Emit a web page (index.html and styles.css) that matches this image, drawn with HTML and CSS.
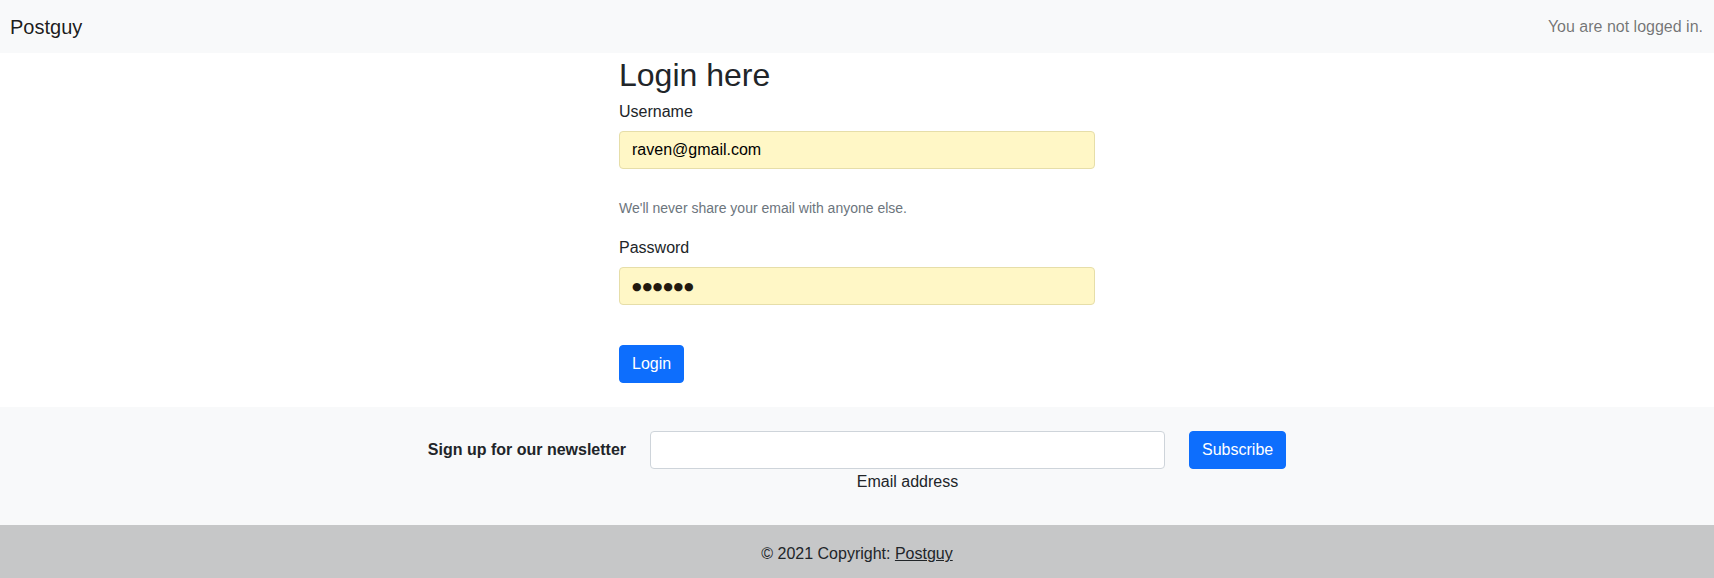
FILE: index.html
```html
<!DOCTYPE html>
<html lang="en">
<head>
<meta charset="utf-8">
<title>Postguy - Login</title>
<link rel="stylesheet" href="styles.css">
</head>
<body>
<nav class="navbar">
  <a class="brand" href="#">Postguy</a>
  <span class="nav-status">You are not logged in.</span>
</nav>

<main class="login">
  <h2 class="login-title">Login here</h2>
  <form class="login-form">
    <label class="field-label" for="username">Username</label>
    <input class="field-input autofilled" id="username" type="text" value="raven@gmail.com">
    <div class="form-help">We'll never share your email with anyone else.</div>
    <label class="field-label" for="password">Password</label>
    <input class="field-input autofilled pw" id="password" type="text" value="●●●●●●">
    <button class="btn btn-primary login-btn" type="button">Login</button>
  </form>
</main>

<section class="newsletter">
  <div class="news-row">
    <p class="news-title">Sign up for our newsletter</p>
    <div class="news-field">
      <input class="field-input news-input" id="news-email" type="email">
      <label class="news-label" for="news-email">Email address</label>
    </div>
    <button class="btn btn-primary" type="button">Subscribe</button>
  </div>
</section>

<footer class="footer">
  © 2021 Copyright: <a class="footer-link" href="#">Postguy</a>
</footer>
</body>
</html>
```

FILE: styles.css
```css
* { box-sizing: border-box; }

html, body {
  margin: 0;
  padding: 0;
}

body {
  font-family: "Liberation Sans", Arial, sans-serif;
  font-size: 16px;
  line-height: 1.5;
  color: #212529;
  background: #fff;
}

.navbar {
  height: 53px;
  display: flex;
  align-items: center;
  justify-content: space-between;
  padding: 0 11px 0 10px;
  background: #f8f9fa;
}

.brand {
  font-size: 20px;
  color: rgba(0, 0, 0, 0.9);
  text-decoration: none;
  line-height: 1.5;
}

.nav-status {
  color: rgba(0, 0, 0, 0.55);
  font-size: 16px;
}

.login {
  width: 476px;
  margin: 0 auto;
  padding: 3px 0 24px;
}

.login-title {
  margin: 0 0 6px;
  font-size: 32px;
  font-weight: 500;
  line-height: 1.2;
}

.login-form {
  display: flex;
  flex-direction: column;
  align-items: flex-start;
}

.field-label {
  display: block;
  margin-bottom: 7px;
}

.field-input {
  display: block;
  width: 100%;
  height: 38px;
  padding: 6px 12px;
  font-family: inherit;
  font-size: 16px;
  line-height: 1.5;
  color: #212529;
  background: #fff;
  border: 1px solid #ced4da;
  border-radius: 4px;
  outline: none;
}

.autofilled {
  background: #fff7c6;
  border-color: #e6dea9;
  color: #000;
}

.pw {
  font-family: "DejaVu Sans", sans-serif;
  font-size: 11px;
  letter-spacing: 0.8px;
  color: #22190f;
}

.form-help {
  margin-top: 29px;
  margin-bottom: 17px;
  font-size: 14px;
  line-height: 1.5;
  color: #6c757d;
}

.btn {
  display: inline-block;
  height: 38px;
  padding: 6px 12px;
  font-family: inherit;
  font-size: 16px;
  line-height: 1.5;
  border: 1px solid transparent;
  border-radius: 4px;
  cursor: pointer;
}

.btn-primary {
  color: #fff;
  background: #0d6efd;
  border-color: #0d6efd;
}

.login-btn {
  margin-top: 40px;
}

.newsletter {
  background: #f8f9fa;
  padding: 24px 0 31px;
}

.news-row {
  display: flex;
  justify-content: center;
  align-items: flex-start;
  gap: 24px;
}

.news-title {
  margin: 0;
  padding-top: 7px;
  font-weight: 700;
}

.news-field {
  width: 515px;
  display: flex;
  flex-direction: column;
  align-items: center;
}

.news-input {
  background: #fff;
}

.news-label {
  display: block;
  margin-top: 1px;
}

.footer {
  background: #c6c7c8;
  text-align: center;
  padding: 17px 0 13px;
  line-height: 1.5;
}

.footer-link {
  color: #212529;
  text-decoration: underline;
}
```
